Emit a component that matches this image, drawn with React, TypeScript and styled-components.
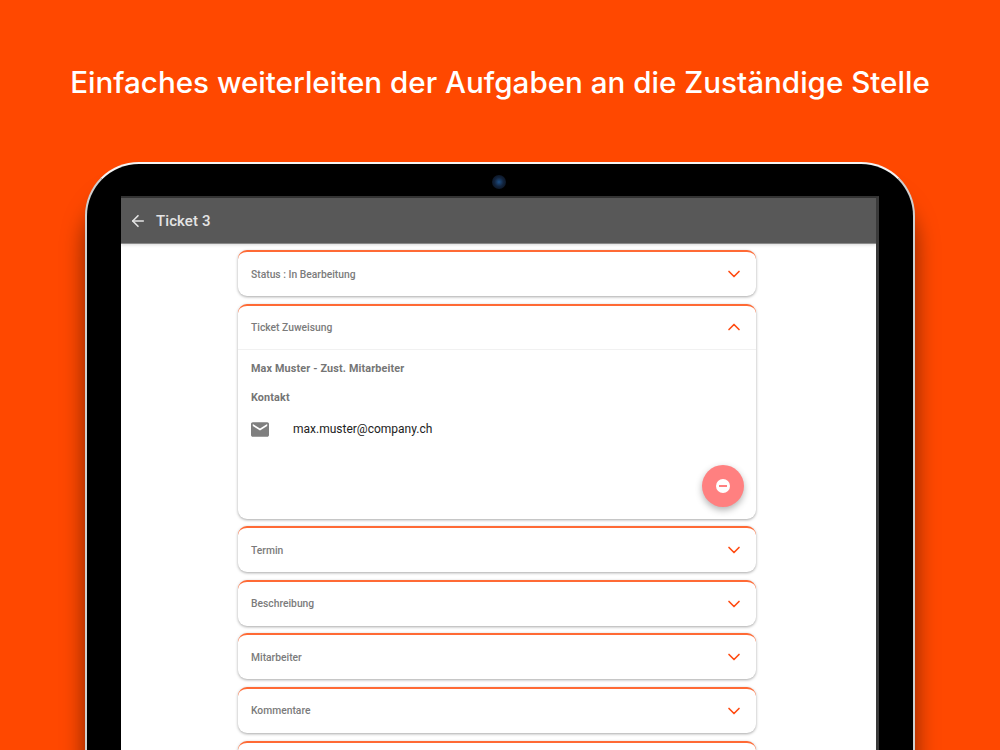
import React from 'react';
import styled, { createGlobalStyle } from 'styled-components';
import { ArrowLeft, ChevronDown, ChevronUp } from 'lucide-react';

const GlobalStyle = createGlobalStyle`
  html, body {
    margin: 0;
    height: 100%;
    overflow: hidden;
    background: #ff4800;
  }
`;

const Page = styled.div`
  width: 1000px;
  height: 750px;
  overflow: hidden;
  background: #ff4800;
  display: flex;
  flex-direction: column;
  align-items: center;
`;

const Headline = styled.h1`
  margin: 0;
  height: 162px;
  flex: none;
  padding-top: 62px;
  box-sizing: border-box;
  font-family: Inter, "Liberation Sans", sans-serif;
  font-size: 29.6px;
  line-height: 40px;
  font-weight: 500;
  color: #fff;
  white-space: nowrap;
`;

const Tablet = styled.div`
  width: 830px;
  height: 588px;
  flex: none;
  box-sizing: border-box;
  padding: 32px 34px 0 34px;
  background: #000;
  border: 2px solid #cfcfcf;
  border-top-color: #f4f4f4;
  border-bottom: none;
  border-radius: 54px 54px 0 0;
  box-shadow: 0 30px 22px rgba(0, 0, 0, 0.5);
  position: relative;
`;

const Camera = styled.div`
  position: absolute;
  top: 11px;
  left: 405px;
  width: 14px;
  height: 14px;
  border-radius: 50%;
  background: radial-gradient(circle, #1d4f86 0%, #12233c 45%, #070b12 100%);
`;

const Screen = styled.div`
  height: 100%;
  background: #fff;
  border-top: 2px solid #333;
  border-right: 3px solid #3a3a3a;
  display: flex;
  flex-direction: column;
  overflow: hidden;
`;

const AppBar = styled.header`
  height: 45px;
  flex: none;
  background: #585858;
  border-bottom: 1px solid #8a8a8a;
  display: flex;
  align-items: center;
  gap: 9px;
  padding-left: 8px;
  color: #e4e4e4;
  box-shadow: 0 1px 3px rgba(0, 0, 0, 0.15);
`;

const AppTitle = styled.span`
  font-family: Roboto, "Liberation Sans", sans-serif;
  font-size: 15px;
  font-weight: 500;
  letter-spacing: 0.1px;
`;

const CardList = styled.main`
  width: 518px;
  margin: 6px 0 0 117px;
  display: flex;
  flex-direction: column;
  gap: 7.6px;
`;

const Card = styled.section`
  background: #fff;
  border-top: 2px solid #ff6a35;
  border-radius: 9px;
  box-shadow: 0 1px 3px rgba(0, 0, 0, 0.35);
  position: relative;
  flex: none;
`;

const CardHead = styled.div<{ $open?: boolean }>`
  height: 44px;
  box-sizing: border-box;
  padding: 0 12px 0 13px;
  display: flex;
  align-items: center;
  justify-content: space-between;
  border-bottom: ${props => (props.$open ? '1px solid #f1f1f1' : 'none')};
  color: #ff4b12;
`;

const CardLabel = styled.span`
  font-family: Roboto, "Liberation Sans", sans-serif;
  font-size: 10.3px;
  font-weight: 500;
  color: #7b7b7b;
`;

const CardBody = styled.div`
  height: 169px;
  box-sizing: border-box;
  padding: 13px 13px 0;
  display: flex;
  flex-direction: column;
`;

const BoldLine = styled.div`
  font-family: Roboto, "Liberation Sans", sans-serif;
  font-size: 10.8px;
  line-height: 12px;
  font-weight: 700;
  letter-spacing: 0.15px;
  color: #757575;
  margin-bottom: 17px;
`;

const ContactRow = styled.div`
  display: flex;
  align-items: center;
  gap: 24px;
  margin-top: 1px;
  color: #7f7f7f;
`;

const ContactText = styled.span`
  font-family: Roboto, "Liberation Sans", sans-serif;
  font-size: 12px;
  color: #222;
`;

const Fab = styled.div`
  position: absolute;
  right: 12px;
  bottom: 12px;
  width: 42px;
  height: 42px;
  border-radius: 50%;
  background: #ff8080;
  box-shadow: 0 3px 7px rgba(0, 0, 0, 0.3);
  display: flex;
  align-items: center;
  justify-content: center;
`;

const FabDot = styled.div`
  width: 14px;
  height: 14px;
  border-radius: 50%;
  background: #fff;
  display: flex;
  align-items: center;
  justify-content: center;
`;

const FabMinus = styled.div`
  width: 8px;
  height: 2px;
  background: #ff8080;
`;

const MailIcon = () => (
  <svg width="18" height="15" viewBox="2 4 20 16" fill="currentColor">
    <path d="M20 4H4c-1.1 0-2 .9-2 2v12c0 1.1.9 2 2 2h16c1.100 0 2-.9 2-2V6c0-1.100-.9-2-2-2zm0 4l-8 5-8-5V6l8 5 8-5v2z" />
  </svg>
);

const closedCards = ['Termin', 'Beschreibung', 'Mitarbeiter', 'Kommentare', ''];

const Closed: React.FC<{ label: string }> = ({ label }) => (
  <Card>
    <CardHead>
      <CardLabel>{label}</CardLabel>
      <ChevronDown size={20} strokeWidth={2} />
    </CardHead>
  </Card>
);

const App: React.FC = () => (
  <Page>
    <GlobalStyle />
    <Headline>Einfaches weiterleiten der Aufgaben an die Zuständige Stelle</Headline>
    <Tablet>
      <Camera />
      <Screen>
        <AppBar>
          <ArrowLeft size={18} strokeWidth={2.2} />
          <AppTitle>Ticket 3</AppTitle>
        </AppBar>
        <CardList>
          <Closed label="Status : In Bearbeitung" />
          <Card>
            <CardHead $open>
              <CardLabel>Ticket Zuweisung</CardLabel>
              <ChevronUp size={20} strokeWidth={2} />
            </CardHead>
            <CardBody>
              <BoldLine>Max Muster - Zust. Mitarbeiter</BoldLine>
              <BoldLine>Kontakt</BoldLine>
              <ContactRow>
                <MailIcon />
                <ContactText>max.muster@company.ch</ContactText>
              </ContactRow>
            </CardBody>
            <Fab>
              <FabDot>
                <FabMinus />
              </FabDot>
            </Fab>
          </Card>
          {closedCards.map(label => (
            <Closed key={label || 'cut-off'} label={label} />
          ))}
        </CardList>
      </Screen>
    </Tablet>
  </Page>
);

export default App;
